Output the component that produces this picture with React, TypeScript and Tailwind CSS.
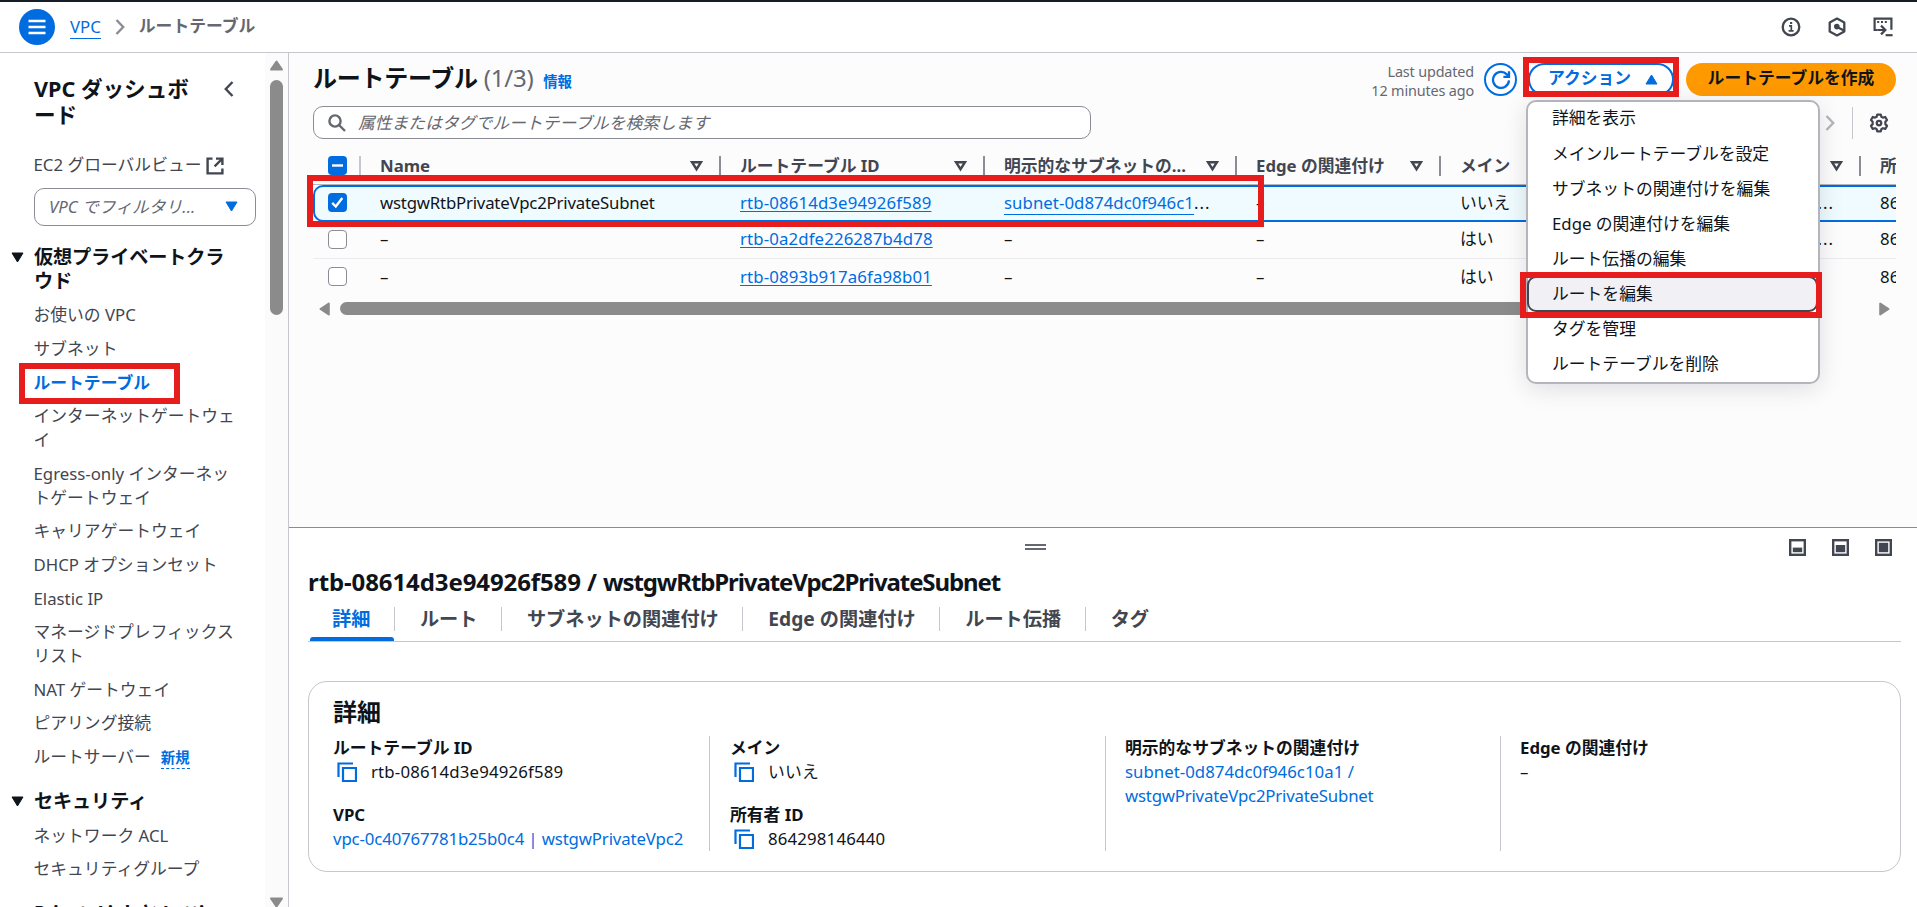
import type { ReactNode } from "react";
import clsx from "clsx";

type NavItem = { label: string; active?: boolean; badge?: string };

const vpcNav: NavItem[] = [
  { label: "お使いの VPC" },
  { label: "サブネット" },
  { label: "ルートテーブル", active: true },
  { label: "インターネットゲートウェイ" },
  { label: "Egress-only インターネットゲートウェイ" },
  { label: "キャリアゲートウェイ" },
  { label: "DHCP オプションセット" },
  { label: "Elastic IP" },
  { label: "マネージドプレフィックスリスト" },
  { label: "NAT ゲートウェイ" },
  { label: "ピアリング接続" },
  { label: "ルートサーバー", badge: "新規" },
];

const securityNav: NavItem[] = [
  { label: "ネットワーク ACL" },
  { label: "セキュリティグループ" },
];

const columns = [
  { key: "name", label: "Name", filter: true },
  { key: "id", label: "ルートテーブル ID", filter: true },
  { key: "subnet", label: "明示的なサブネットの...", filter: true },
  { key: "edge", label: "Edge の関連付け", filter: true },
  { key: "main", label: "メイン", filter: false },
  { key: "vpc", label: "", filter: true },
  { key: "owner", label: "所有者 ID", filter: false },
];

const rows = [
  { name: "wstgwRtbPrivateVpc2PrivateSubnet", id: "rtb-08614d3e94926f589", subnet: "subnet-0d874dc0f946c1", main: "いいえ", more: true, selected: true },
  { name: "–", id: "rtb-0a2dfe226287b4d78", subnet: "", main: "はい", more: true, selected: false },
  { name: "–", id: "rtb-0893b917a6fa98b01", subnet: "", main: "はい", more: false, selected: false },
];

const actions = [
  "詳細を表示",
  "メインルートテーブルを設定",
  "サブネットの関連付けを編集",
  "Edge の関連付けを編集",
  "ルート伝播の編集",
  "ルートを編集",
  "タグを管理",
  "ルートテーブルを削除",
];

const tabs = ["詳細", "ルート", "サブネットの関連付け", "Edge の関連付け", "ルート伝播", "タグ"];

const tableGrid = "grid grid-cols-[48px_360px_264px_252px_204px_200px_220px_200px]";

function MenuIcon() {
  return (
    <svg width="18" height="16" viewBox="0 0 18 16" fill="none" stroke="#fff" strokeWidth="2.4">
      <path d="M0.5 2h17M0.5 8h17M0.5 14h17" />
    </svg>
  );
}

function Chevron({ className, left }: { className?: string; left?: boolean }) {
  return (
    <svg className={className} width="10" height="16" viewBox="0 0 10 16" fill="none" stroke="currentColor" strokeWidth="2.4">
      <path d={left ? "M8.5 1 1.8 8l6.7 7" : "M1.5 1l6.7 7-6.7 7"} />
    </svg>
  );
}

function ExternalIcon() {
  return (
    <svg width="18" height="18" viewBox="0 0 18 18" fill="none" stroke="#424650" strokeWidth="2.4">
      <path d="M6.5 1.6H1.6v14.8h14.8v-4.9" />
      <path d="M10 1.6h6.4V8M16 2 8.6 9.4" />
    </svg>
  );
}

function Caret({ up, className }: { up?: boolean; className?: string }) {
  return (
    <svg className={className} width="13" height="11" viewBox="0 0 13 11" fill="currentColor">
      <path d={up ? "M6.5 1 12 10H1Z" : "M6.5 10 1 1h11Z"} stroke="currentColor" strokeLinejoin="round" />
    </svg>
  );
}

function FilterIcon() {
  return (
    <svg width="13" height="12" viewBox="0 0 13 12" fill="none" stroke="#424650" strokeWidth="2.4">
      <path d="M2 2.2h9L6.5 9.2Z" />
    </svg>
  );
}

function SearchIcon() {
  return (
    <svg width="18" height="18" viewBox="0 0 18 18" fill="none" stroke="#656871" strokeWidth="2.4">
      <circle cx="7" cy="7" r="5.6" />
      <path d="m11 11 6 6" />
    </svg>
  );
}

function RefreshIcon() {
  return (
    <svg width="20" height="20" viewBox="0 0 20 20" fill="none" stroke="#006ce0" strokeWidth="2.3">
      <path d="M18 10.4a8 8 0 1 1-2.2-6l2.2 2.3" />
      <path d="M18 1.2v5.6h-5.6" />
    </svg>
  );
}

function InfoIcon() {
  return (
    <svg width="20" height="20" viewBox="0 0 20 20" fill="none" stroke="#424650" strokeWidth="2.3">
      <circle cx="10" cy="10" r="8.3" />
      <path d="M8 8.9h2.3v5M7.6 13.9h5" strokeWidth="1.7" />
      <path d="M9 6h2.2" strokeWidth="2" />
    </svg>
  );
}

function HexIcon() {
  return (
    <svg width="18" height="20" viewBox="0 0 18 20" fill="none" stroke="#424650" strokeWidth="2.3" strokeLinejoin="round">
      <path d="M9 1.6 16.3 5.4v9.2L9 18.4l-7.3-3.8V5.4Z" />
      <circle cx="8.8" cy="9.6" r="2.8" fill="#424650" stroke="none" />
      <path d="m9 10 7 3.6" />
    </svg>
  );
}

function ShellIcon() {
  return (
    <svg width="20" height="20" viewBox="0 0 20 20" fill="none" stroke="#424650" strokeWidth="2.2">
      <path d="M4.8 13H1.6V1.6h16.8v11.2" />
      <path d="M4.2 5h2M8 5h2M11.8 5h2" strokeWidth="1.8" />
      <path d="M5 13h6.6M8 8.6l4.4 4.4L8 17.4" />
      <path d="M12.6 18.2h7" />
    </svg>
  );
}

function GearIcon() {
  return (
    <svg width="20" height="20" viewBox="0 0 16 16" fill="none" stroke="#424650" strokeWidth="1.8" strokeLinejoin="round">
      <path d="M6.6 1.2h2.8l.5 1.8 1.2.7 1.9-.5 1.4 2.4-1.3 1.4v1.900l1.3 1.4-1.4 2.4-1.900-.5-1.2.7-.5 1.800H6.6l-.5-1.8-1.200-.7-1.900.5-1.400-2.400 1.300-1.400V7L1.600 5.600 3 3.200l1.900.5L6.100 3Z" />
      <circle cx="8" cy="8" r="1.8" />
    </svg>
  );
}

function CopyIcon() {
  return (
    <svg width="20" height="20" viewBox="0 0 20 20" fill="none" stroke="#006ce0" strokeWidth="2.2">
      <path d="M1.500 15V1.500H16" />
      <path d="M6 6h13v13H6z" />
    </svg>
  );
}

function PanelIcon({ top }: { top: number }) {
  return (
    <svg width="17" height="17" viewBox="0 0 17 17">
      <rect x="1.200" y="1.200" width="14.600" height="14.600" fill="none" stroke="#424650" strokeWidth="2.400" />
      <rect x="3.800" y={top} width="9.400" height={13.2 - top} fill="#424650" />
    </svg>
  );
}

function Checkbox({ state }: { state: "on" | "off" | "mixed" }) {
  return (
    <span
      className={clsx(
        "flex h-[19px] w-[19px] items-center justify-center rounded-[4px]",
        state === "off" ? "border border-[#8c8c94] bg-white" : "bg-[#006ce0]"
      )}
    >
      {state !== "off" && (
        <svg width="19" height="19" viewBox="0 0 19 19" fill="none" stroke="#fff" strokeWidth="2.4">
          <path d={state === "on" ? "m4.200 9.800 3.600 3.700 6.500-8.500" : "M4 9.500h11"} />
        </svg>
      )}
    </span>
  );
}

function Highlight({ className }: { className: string }) {
  return <div className={clsx("pointer-events-none absolute z-30 border-6 border-[#e71d1d]", className)} />;
}

function NavHeading({ children, tight }: { children: ReactNode; tight?: boolean }) {
  return (
    <div className="flex text-[19.2px] leading-6 font-bold text-[#0f141a]">
      <Caret className="mt-[7px] mr-[10px] ml-[11px] shrink-0" />
      <span className={clsx("w-[200px]", tight ? "tracking-[-0.7px] whitespace-nowrap" : "tracking-[-0.15px]")}>
        {children}
      </span>
    </div>
  );
}

function NavList({ items }: { items: NavItem[] }) {
  return (
    <ul className="mt-[10.6px] flex flex-col gap-[9.6px] pl-[33.5px]">
      {items.map((item) => (
        <li
          key={item.label}
          className={clsx("w-[203px] leading-6 break-all", item.active ? "font-bold text-[#006ce0]" : "text-[#424650]")}
        >
          {item.label}
          {item.badge && (
            <span className="ml-[10px] inline-block border-b border-dashed border-[#006ce0] text-[14.4px] leading-[20px] font-bold text-[#006ce0]">
              {item.badge}
            </span>
          )}
        </li>
      ))}
    </ul>
  );
}

function Sidebar() {
  return (
    <aside className="relative flex w-[289px] shrink-0 border-r border-[#c6c6cd] bg-white">
      <div className="w-[265px] overflow-hidden">
        <div className="flex pt-[23px] pl-[34px]">
          <h2 className="w-[176px] text-[21.6px] leading-[26.4px] font-bold break-all text-[#0f141a]">VPC ダッシュボード</h2>
          <Chevron left className="mt-[5px] ml-[14px] text-[#424650]" />
        </div>
        <div className="mt-[24px] flex items-center pl-[33.5px] leading-6 text-[#424650]">
          EC2 グローバルビュー
          <span className="ml-[5px] pt-[3px]">
            <ExternalIcon />
          </span>
        </div>
        <div className="mt-[11px] ml-[34px] flex h-[38px] w-[222px] items-center justify-between rounded-[10px] border border-[#8c8c94] pr-[17px] pl-[14px] text-[#656871] italic">
          <span>VPC でフィルタリ...</span>
          <Caret className="text-[#006ce0]" />
        </div>
        <div className="mt-[19px]">
          <NavHeading>仮想プライベートクラウド</NavHeading>
          <NavList items={vpcNav} />
        </div>
        <div className="mt-[20px]">
          <NavHeading>セキュリティ</NavHeading>
          <NavList items={securityNav} />
        </div>
        <div className="mt-[20px]">
          <NavHeading tight>PrivateLink と Lattice</NavHeading>
        </div>
      </div>
      <div className="flex w-[23px] flex-col items-center justify-between bg-[#fbfbfb] pt-[7px]">
        <div className="flex flex-col items-center gap-[9px]">
          <svg width="15" height="11" viewBox="0 0 15 11" fill="#8b8b8b">
            <path d="M7.500 1.500 13 9.500H2Z" stroke="#8b8b8b" strokeWidth="2" strokeLinejoin="round" />
          </svg>
          <div className="h-[235px] w-[13px] rounded-full bg-[#8b8b8b]" />
        </div>
        <svg width="15" height="10" viewBox="0 0 15 10" fill="#8b8b8b">
          <path d="M7.500 9.500 2 1.500h11Z" stroke="#8b8b8b" strokeWidth="2" strokeLinejoin="round" />
        </svg>
      </div>
      <Highlight className="top-[310px] left-[19px] h-[41px] w-[161px]" />
    </aside>
  );
}

function ActionMenu() {
  return (
    <div className="absolute top-[47px] left-[1237px] z-20 w-[294px] rounded-[10px] border-2 border-[#b4b4bb] bg-white shadow-[0_5px_24px_rgba(0,7,22,0.12)]">
      <ul className="-mt-px flex flex-col">
        {actions.map((action, i) => (
          <li
            key={action}
            className={clsx(
              "flex h-[35.1px] items-center pb-px pl-[24px] text-[#0f141a]",
              i === 5 && "-ml-px rounded-[9px] border-2 border-[#424650] bg-[#f0f0f5] pl-[23px]!"
            )}
          >
            {action}
          </li>
        ))}
      </ul>
      <Highlight className="top-[170px] -left-[8px] h-[46px] w-[302px]" />
    </div>
  );
}

function RouteTable() {
  return (
    <div className="relative mt-[13px] ml-[24px] w-[1583px]">
      <div className="overflow-hidden">
        <div className={clsx(tableGrid, "h-[33px] w-[1748px] border-b border-[#b4b4bb] font-bold text-[#424650]")}>
          <div className="mt-[4px] h-[20px] border-r-2 border-[#c6c6cd] pl-[15px]">
            <Checkbox state="mixed" />
          </div>
          {columns.map((col) => (
            <div
              key={col.key}
              className="mt-[4px] flex h-[20px] items-center justify-between border-r-2 border-[#8c8c94] pr-[16px] pl-[19px] leading-5 whitespace-nowrap"
            >
              <span>{col.label}</span>
              {col.filter && <FilterIcon />}
            </div>
          ))}
        </div>
        {rows.map((row, i) => {
          const cell = row.selected ? "pl-[17px]" : "pl-[19px]";
          return (
            <div
              key={row.id}
              className={clsx(
                tableGrid,
                "h-[37px] w-[1748px] items-center pb-[2px] text-[#0f141a]",
                row.selected && "rounded-l-[10px] border-y-2 border-l-2 border-[#006ce0] bg-[#f0fbff]",
                i === 1 && "border-b border-[#ebebf0]"
              )}
            >
              <div className={row.selected ? "pl-[13px]" : "pl-[15px]"}>
                <Checkbox state={row.selected ? "on" : "off"} />
              </div>
              <div className={clsx("tracking-[-0.2px]", cell)}>{row.name}</div>
              <div className={clsx("tracking-[0.13px]", cell)}>
                <a className="text-[#006ce0] underline underline-offset-2">{row.id}</a>
              </div>
              <div className={clsx("tracking-[0.05px]", cell)}>
                {row.subnet ? (
                  <>
                    <a className="inline-block border-b border-[#006ce0] leading-[23px] text-[#006ce0]">{row.subnet}</a>
                    <span className="tracking-[1px]">...</span>
                  </>
                ) : (
                  "–"
                )}
              </div>
              <div className={cell}>–</div>
              <div className={cell}>{row.main}</div>
              <div className={clsx("text-right tracking-[1px]", row.selected ? "pr-[29px]" : "pr-[27px]")}>
                {row.more && "..."}
              </div>
              <div className={clsx("tracking-[0.170px]", cell)}>864298146440</div>
            </div>
          );
        })}
      </div>
      <div className="mt-[6px] flex h-[13px] items-center pr-[6px] pl-[6px]">
        <svg width="11" height="14" viewBox="0 0 11 14">
          <path d="M1.500 7 9.800 1.500v11Z" fill="#8b8b8b" stroke="#8b8b8b" strokeWidth="2" strokeLinejoin="round" />
        </svg>
        <div className="mr-[190px] ml-[10px] h-[13px] flex-1 rounded-full bg-[#8b8b8b]" />
        <svg width="11" height="14" viewBox="0 0 11 14">
          <path d="M9.500 7 1.200 1.500v11Z" fill="#8b8b8b" stroke="#8b8b8b" strokeWidth="2" strokeLinejoin="round" />
        </svg>
      </div>
      <Highlight className="top-[23px] -left-[6px] h-[52px] w-[957px]" />
    </div>
  );
}

function ListPanel() {
  return (
    <section className="relative h-[474px] overflow-hidden bg-[#fcfcfd]">
      <div className="flex h-[53px] pt-[10px] pr-[21px] pl-[24px]">
        <h1 className="flex h-[30px] items-baseline text-[24px] leading-[30px] font-bold tracking-[-0.25px] text-[#0f141a]">
          ルートテーブル
          <span className="ml-[6px] font-normal text-[#656871]">(1/3)</span>
          <span className="ml-[10px] text-[14.4px] text-[#006ce0]">情報</span>
        </h1>
        <div className="ml-auto flex">
          <div className="-mt-px mr-[10px] text-right text-[14.4px] leading-[19.2px] tracking-[-0.15px] text-[#656871]">
            Last updated
            <br />
            12 minutes ago
          </div>
          <button className="flex h-[33px] w-[33px] items-center justify-center rounded-full border-2 border-[#006ce0] bg-white">
            <RefreshIcon />
          </button>
          <div className="relative ml-[11px]">
            <button className="flex h-[33px] w-[146px] items-center rounded-full border-2 border-[#006ce0] bg-white pb-[3px] pl-[18px] font-bold text-[#006ce0]">
              アクション
              <Caret up className="mt-[3px] ml-[14px]" />
            </button>
            <Highlight className="-top-[6px] -left-[5px] h-[40px] w-[156px]" />
          </div>
          <button className="ml-[12px] h-[33px] w-[210px] rounded-full bg-[#ff9900] pb-[3px] font-bold text-[#0f141a]">
            ルートテーブルを作成
          </button>
        </div>
      </div>
      <div className="flex h-[33px] items-center pr-[28px] pl-[24px]">
        <div className="flex h-[33px] w-[778px] items-center rounded-[10px] border border-[#8c8c94] bg-white pl-[14px] text-[#656871] italic">
          <SearchIcon />
          <span className="ml-[12px]">属性またはタグでルートテーブルを検索します</span>
        </div>
        <Chevron className="ml-auto text-[#b4b4bb]" />
        <div className="mr-[16px] ml-[17px] h-[32px] w-px bg-[#c6c6cd]" />
        <GearIcon />
      </div>
      <RouteTable />
      <ActionMenu />
    </section>
  );
}

function Field({ label, copy, link, children }: { label: string; copy?: boolean; link?: boolean; children: ReactNode }) {
  return (
    <div className="leading-6">
      <div className="font-bold text-[#0f141a]">{label}</div>
      <div className={clsx("flex items-center", link ? "text-[#006ce0]" : "text-[#0f141a]")}>
        {copy && (
          <span className="mr-[14px] ml-[4px]">
            <CopyIcon />
          </span>
        )}
        <span className={link ? "tracking-[-0.13px]" : "tracking-[0.170px]"}>{children}</span>
      </div>
    </div>
  );
}

function SplitPanel() {
  return (
    <section className="flex-1 border-t border-[#8c8c94] bg-white pr-[16px] pl-[19px]">
      <div className="flex h-[40px] items-start justify-end gap-[26px] pt-[11px] pr-[9px]">
        <div className="mt-[5px] mr-[717px] h-[6px] w-[21px] border-y-2 border-[#656871]" />
        <PanelIcon top={8.6} />
        <PanelIcon top={6} />
        <PanelIcon top={3.8} />
      </div>
      <h2 className="text-[24px] leading-[28px] font-bold whitespace-nowrap text-[#0f141a]">
        <span className="tracking-[-0.1px]">rtb-08614d3e94926f589 / </span>
        <span className="tracking-[-1.1px]">wstgwRtbPrivateVpc2PrivateSubnet</span>
      </h2>
      <div className="flex h-[46px] border-b border-[#c6c6cd] pt-[11px] pl-[2px]">
        {tabs.map((tab, i) => (
          <div
            key={tab}
            className={clsx(
              "relative h-[24px] text-[19.2px] leading-6 font-bold",
              i === 0 ? "pl-[22px] text-[#006ce0]" : "pl-[25px] text-[#424650]",
              i < tabs.length - 1 && "border-r border-[#c6c6cd] pr-[23.5px]"
            )}
          >
            {tab}
            {i === 0 && <div className="absolute top-[30px] left-0 h-[4px] w-full rounded-t-[3px] bg-[#006ce0]" />}
          </div>
        ))}
      </div>
      <div className="mt-[39px] h-[191px] rounded-[19px] border border-[#c6c6cd] pt-[15px] pl-[24px]">
        <h3 className="text-[24px] leading-[30px] font-bold text-[#0f141a]">詳細</h3>
        <div className="mt-[9px] grid h-[115px] grid-cols-[376px_396px_395px_380px]">
          <div className="flex flex-col gap-[19px]">
            <Field label="ルートテーブル ID" copy>rtb-08614d3e94926f589</Field>
            <Field label="VPC" link>vpc-0c40767781b25b0c4 | wstgwPrivateVpc2</Field>
          </div>
          <div className="flex flex-col gap-[19px] border-l border-[#c6c6cd] pl-[20px]">
            <Field label="メイン" copy>いいえ</Field>
            <Field label="所有者 ID" copy>864298146440</Field>
          </div>
          <div className="border-l border-[#c6c6cd] pl-[19px]">
            <Field label="明示的なサブネットの関連付け" link>
              <span className="tracking-[0.03px]">subnet-0d874dc0f946c10a1 /</span>
              <br />
              <span className="tracking-[-0.2px]">wstgwPrivateVpc2PrivateSubnet</span>
            </Field>
          </div>
          <div className="border-l border-[#c6c6cd] pl-[19px]">
            <Field label="Edge の関連付け">–</Field>
          </div>
        </div>
      </div>
    </section>
  );
}

export default function App() {
  return (
    <div
      lang="ja"
      className="flex h-[907px] w-[1917px] flex-col overflow-hidden bg-white font-['Noto_Sans','Noto_Sans_CJK_JP',sans-serif] text-[16.8px]"
    >
      <header className="flex h-[53px] shrink-0 items-center border-t-2 border-b border-t-[#161d26] border-b-[#c6c6cd] pr-[24px] pl-[19px]">
        <button className="flex h-[36px] w-[36px] items-center justify-center rounded-full bg-[#006ce0]">
          <MenuIcon />
        </button>
        <a className="ml-[15px] border-b border-[#006ce0] pb-px leading-[21px] text-[#006ce0]">VPC</a>
        <Chevron className="ml-[14px] text-[#8c8c94]" />
        <span className="ml-[14px] pb-[2px] font-bold text-[#656871]">ルートテーブル</span>
        <div className="ml-auto flex items-center gap-[27px]">
          <InfoIcon />
          <HexIcon />
          <ShellIcon />
        </div>
      </header>
      <div className="flex min-h-0 flex-1">
        <Sidebar />
        <main className="flex min-w-0 flex-1 flex-col">
          <ListPanel />
          <SplitPanel />
        </main>
      </div>
    </div>
  );
}
